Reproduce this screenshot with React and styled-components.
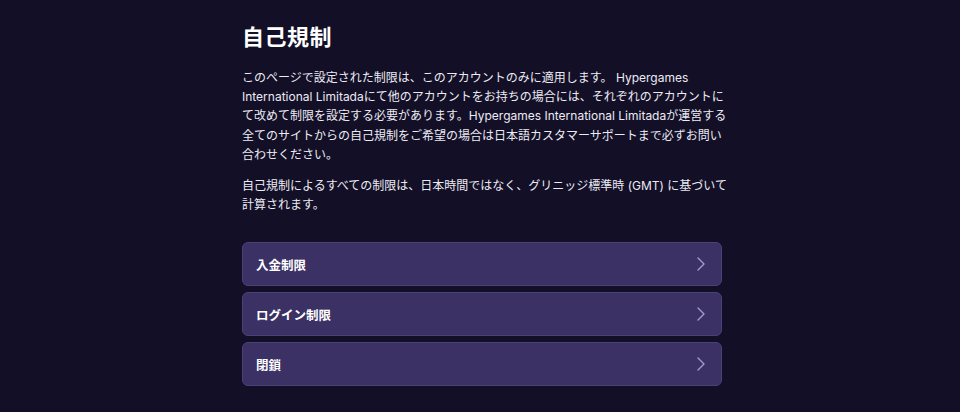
import styled, { createGlobalStyle } from "styled-components";

const GlobalStyle = createGlobalStyle`
  html, body {
    margin: 0;
    padding: 0;
    background: #120f27;
  }
  body {
    font-family: Inter, "Noto Sans CJK JP", sans-serif;
    color: #ffffff;
  }
`;

const Page = styled.div`
  min-height: 412px;
  display: flex;
  justify-content: center;
  padding-left: 4px;
`;

const Column = styled.main`
  width: 480px;
  padding-top: 20px;
`;

const Title = styled.h1`
  margin: 0 0 14px;
  font-size: 22px;
  line-height: 34px;
  font-weight: 700;
  letter-spacing: 0.5px;
`;

const Paragraph = styled.p`
  margin: 0 -20px 0 0;
  font-size: 12px;
  line-height: 19.2px;
  color: #ecebf2;
  white-space: nowrap;

  & + & {
    margin-top: 12px;
  }
`;

const LimitList = styled.ul`
  list-style: none;
  margin: 28px 0 0;
  padding: 0;
  display: flex;
  flex-direction: column;
  gap: 6px;
`;

const LimitItem = styled.li`
  height: 44px;
  box-sizing: border-box;
  display: flex;
  align-items: center;
  justify-content: space-between;
  padding: 0 14px 0 13px;
  background: #3b3164;
  border: 1px solid #4b4179;
  border-radius: 6px;
  font-size: 12.5px;
  font-weight: 700;
  cursor: pointer;
`;

const Chevron = () => (
  <svg width="12" height="18" viewBox="0 0 12 18" fill="none">
    <path d="M3 3l6 6-6 6" stroke="#a39cca" strokeWidth="1.4" strokeLinecap="round" strokeLinejoin="round" />
  </svg>
);

const limits = ["入金制限", "ログイン制限", "閉鎖"];

const App = () => (
  <>
    <GlobalStyle />
    <Page>
      <Column>
        <Title>自己規制</Title>
        <Paragraph>
          このページで設定された制限は、このアカウントのみに適用します。 Hypergames
          <br />
          International Limitadaにて他のアカウントをお持ちの場合には、それぞれのアカウントに
          <br />
          て改めて制限を設定する必要があります。Hypergames International Limitadaが運営する
          <br />
          全てのサイトからの自己規制をご希望の場合は日本語カスタマーサポートまで必ずお問い
          <br />
          合わせください。
        </Paragraph>
        <Paragraph>
          自己規制によるすべての制限は、日本時間ではなく、グリニッジ標準時 (GMT) に基づいて
          <br />
          計算されます。
        </Paragraph>
        <LimitList>
          {limits.map((label) => (
            <LimitItem key={label}>
              <span>{label}</span>
              <Chevron />
            </LimitItem>
          ))}
        </LimitList>
      </Column>
    </Page>
  </>
);

export default App;
